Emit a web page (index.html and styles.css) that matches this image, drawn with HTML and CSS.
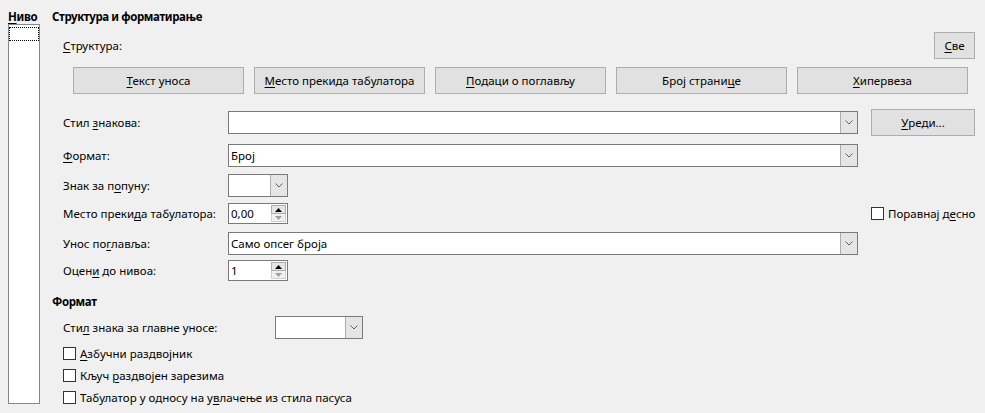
FILE: index.html
```html
<!DOCTYPE html>
<html lang="sr">
<head>
<meta charset="utf-8">
<title>Структура и форматирање</title>
<link rel="stylesheet" href="styles.css">
</head>
<body>
<div class="dialog">
  <div class="levels">
    <div class="levels-label"><u>Н</u>иво</div>
    <div class="levels-list"><div class="focus-item"></div></div>
  </div>
  <div class="main">
    <div class="heading">Структура и форматирање</div>
    <div class="section">
      <div class="structure-row">
        <span class="label"><u>С</u>труктура:</span>
        <button class="btn btn-all"><u>С</u>ве</button>
      </div>
      <div class="tokens">
        <button class="btn"><u>Т</u>екст уноса</button>
        <button class="btn"><u>М</u>есто прекида табулатора</button>
        <button class="btn"><u>П</u>одаци о поглављу</button>
        <button class="btn">Број страни<u>ц</u>е</button>
        <button class="btn"><u>Х</u>ипервеза</button>
      </div>
      <div class="form">
        <div class="row r1">
          <span class="label">Стил <u>з</u>накова:</span>
          <div class="combo wide"><span class="value"></span><span class="arrow"><svg width="8" height="5" viewBox="0 0 8 5"><polyline points="0.5,0.5 4,4 7.5,0.5" fill="none" stroke="#606060" stroke-width="1"/></svg></span></div>
          <button class="btn btn-edit"><u>У</u>реди...</button>
        </div>
        <div class="row r2">
          <span class="label"><u>Ф</u>ормат:</span>
          <div class="combo wide"><span class="value">Број</span><span class="arrow"><svg width="8" height="5" viewBox="0 0 8 5"><polyline points="0.5,0.5 4,4 7.5,0.5" fill="none" stroke="#606060" stroke-width="1"/></svg></span></div>
        </div>
        <div class="row r3">
          <span class="label">Знак за п<u>о</u>пуну:</span>
          <div class="combo narrow"><span class="value"></span><span class="arrow"><svg width="8" height="5" viewBox="0 0 8 5"><polyline points="0.5,0.5 4,4 7.5,0.5" fill="none" stroke="#606060" stroke-width="1"/></svg></span></div>
        </div>
        <div class="row r4">
          <span class="label">Место преки<u>д</u>а табулатора:</span>
          <div class="spin"><span class="value">0,00</span><span class="spin-btns"><span class="up"><svg width="7" height="4" viewBox="0 0 7 4"><polygon points="0,4 3.5,0 7,4" fill="#000"/></svg></span><span class="down"><svg width="7" height="4" viewBox="0 0 7 4"><polygon points="0,0 3.5,4 7,0" fill="#a0a0a0"/></svg></span></span></div>
          <span class="spacer"></span>
          <label class="check check-right"><span class="box"></span><span class="text">Поравнај д<u>е</u>сно</span></label>
        </div>
        <div class="row r5">
          <span class="label">Унос по<u>г</u>лавља:</span>
          <div class="combo wide"><span class="value">Само опсег броја</span><span class="arrow"><svg width="8" height="5" viewBox="0 0 8 5"><polyline points="0.5,0.5 4,4 7.5,0.5" fill="none" stroke="#606060" stroke-width="1"/></svg></span></div>
        </div>
        <div class="row r6">
          <span class="label">Оцен<u>и</u> до нивоа:</span>
          <div class="spin"><span class="value">1</span><span class="spin-btns"><span class="up"><svg width="7" height="4" viewBox="0 0 7 4"><polygon points="0,4 3.5,0 7,4" fill="#000"/></svg></span><span class="down"><svg width="7" height="4" viewBox="0 0 7 4"><polygon points="0,0 3.5,4 7,0" fill="#a0a0a0"/></svg></span></span></div>
        </div>
      </div>
    </div>
    <div class="heading heading-format">Формат</div>
    <div class="section">
      <div class="row r7">
        <span class="label label-long">Сти<u>л</u> знака за главне уносе:</span>
        <div class="combo short"><span class="value"></span><span class="arrow"><svg width="8" height="5" viewBox="0 0 8 5"><polyline points="0.5,0.5 4,4 7.5,0.5" fill="none" stroke="#606060" stroke-width="1"/></svg></span></div>
      </div>
      <label class="check crow first"><span class="box"></span><span class="text"><u>А</u>збучни раздвојник</span></label>
      <label class="check crow"><span class="box"></span><span class="text">Кључ <u>р</u>аздвојен зарезима</span></label>
      <label class="check crow"><span class="box"></span><span class="text">Табулатор у односу на у<u>в</u>лачење из стила пасуса</span></label>
    </div>
  </div>
</div>
</body>
</html>
```
FILE: styles.css
```css
* { box-sizing: border-box; }
html, body { margin: 0; }
body {
  background: #f0f0f0;
  font-family: "Noto Sans", sans-serif;
  font-size: 11.5px;
  color: #000;
  width: 985px;
  height: 413px;
  overflow: hidden;
}
u { text-decoration: underline; text-underline-offset: 2px; text-decoration-thickness: 1px; }
.dialog { display: flex; gap: 12px; padding: 9px 10px 0 8px; }
.levels { width: 32px; flex: none; display: flex; flex-direction: column; }
.levels-label { font-weight: bold; line-height: 15px; height: 15px; white-space: nowrap; letter-spacing: -0.3px; }
.levels-list { height: 380px; background: #fff; border: 1px solid #828790; padding: 2px 0 0 0; }
.focus-item { height: 14px; border: 1px dotted #000; }
.main { flex: 1; min-width: 0; display: flex; flex-direction: column; }
.heading { font-weight: bold; line-height: 16px; height: 16px; letter-spacing: -0.4px; }
.heading-format { margin-top: 13px; }
.section { padding-left: 11px; display: flex; flex-direction: column; }
.structure-row { display: flex; justify-content: space-between; align-items: center; height: 27px; margin-top: 7px; }
.btn {
  font: inherit; color: #000; background: #e1e1e1; border: 1px solid #adadad;
  border-radius: 0; padding: 0; height: 27px; margin: 0;
}
.btn-all { width: 41px; }
.btn-edit { width: 104px; margin-left: 13px; }
.tokens { display: grid; grid-template-columns: repeat(5, 171px); column-gap: 10px; margin: 8px 0 0 10px; }
.form { display: flex; flex-direction: column; margin-top: 15px; }
.row { display: flex; align-items: center; }
.row .label { width: 165px; flex: none; white-space: nowrap; }
.row .label-long { width: 212px; }
.r1 { height: 27px; }
.r2 { height: 23px; margin-top: 8px; }
.r3 { height: 23px; margin-top: 7px; }
.r4 { height: 21px; margin-top: 6px; }
.r5 { height: 23px; margin-top: 8px; }
.r6 { height: 21px; margin-top: 5px; }
.r7 { height: 23px; margin-top: 6px; }
.spacer { flex: 1; }
.combo { display: flex; height: 23px; background: #fff; border: 1px solid #7a7a7a; flex: none; }
.combo.wide { width: 630px; }
.combo.narrow { width: 60px; }
.combo.short { width: 88px; }
.combo .value { flex: 1; padding-left: 2px; line-height: 21px; white-space: nowrap; }
.combo .arrow { width: 17px; background: #e5e5e5; border-left: 1px solid #adadad; display: flex; align-items: center; justify-content: center; }
.spin { display: flex; width: 60px; height: 21px; background: #fff; border: 1px solid #7a7a7a; flex: none; }
.spin .value { flex: 1; padding-left: 2px; line-height: 19px; }
.spin-btns { width: 16px; display: flex; flex-direction: column; padding: 1px 1px 1px 0; }
.spin-btns .up, .spin-btns .down { flex: 1; display: flex; align-items: center; justify-content: center; }
.spin-btns .up { background: #e5e5e5; border: 1px solid #adadad; }
.spin-btns .down { background: #f0f0f0; border: 1px solid #d0d0d0; border-top: 0; }
.check { display: flex; align-items: center; gap: 4px; white-space: nowrap; }
.check-right { width: 104px; }
.check .box { width: 13px; height: 13px; background: #fff; border: 1px solid #333; flex: none; }
.crow { height: 22px; }
.crow.first { margin-top: 3px; }
```
